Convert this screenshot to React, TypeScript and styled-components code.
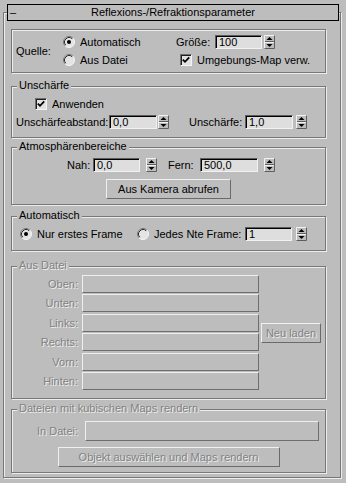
import React from "react";
import styled, { createGlobalStyle, css } from "styled-components";

const BG = "#bdbdbd";
const DARK = "#787878";
const LIGHT = "#ececec";

const Global = createGlobalStyle`
  html, body { margin: 0; padding: 0; background: ${BG}; }
  body { font-family: "Liberation Sans", Arial, sans-serif; font-size: 11px; color: #000; }
  * { box-sizing: border-box; }
`;

const disabledText = css`
  color: #828282;
  text-shadow: 1px 1px 0 #eeeeee;
`;

const Page = styled.div`
  width: 346px;
  height: 483px;
  padding: 12px 0 0 3px;
  overflow: hidden;
`;

const Frame = styled.div`
  width: 338px;
  height: 466px;
  border: 1px solid ${DARK};
  box-shadow: inset 1px 1px 0 ${LIGHT}, 1px 1px 0 ${LIGHT};
  padding-left: 3px;
  display: flex;
  flex-direction: column;
`;

const Header = styled.div`
  margin-top: -9px;
  width: 332px;
  height: 17px;
  border: 1px solid #000;
  background: ${BG};
  display: grid;
  grid-template-columns: 14px 1fr 14px;
  align-items: center;
  line-height: 15px;
`;

const Minus = styled.span`
  padding-left: 2px;
`;

const HeaderTitle = styled.span`
  text-align: center;
  white-space: nowrap;
`;

const Group = styled.div<{ $mt: number; $h: number }>`
  margin: ${(p) => p.$mt}px 0 0 4px;
  width: 315px;
  height: ${(p) => p.$h}px;
  border: 1px solid ${DARK};
  box-shadow: inset 1px 1px 0 ${LIGHT}, 1px 1px 0 ${LIGHT};
  display: flex;
  flex-direction: column;
  flex-shrink: 0;
`;

const Title = styled.span<{ $disabled?: boolean }>`
  align-self: flex-start;
  margin: -8px 0 0 5px;
  padding: 0 2px;
  height: 13px;
  line-height: 13px;
  background: ${BG};
  white-space: nowrap;
  ${(p) => p.$disabled && disabledText}
`;

const Row = styled.div<{ $pl?: number; $mt?: number }>`
  display: flex;
  align-items: center;
  height: 18px;
  padding-left: ${(p) => p.$pl ?? 0}px;
  margin-top: ${(p) => p.$mt ?? 0}px;
`;

const Label = styled.span<{ $w: number; $ml?: number }>`
  width: ${(p) => p.$w}px;
  margin-left: ${(p) => p.$ml ?? 0}px;
  flex-shrink: 0;
  white-space: nowrap;
`;

const Text = styled.span<{ $ml?: number }>`
  margin-left: ${(p) => p.$ml ?? 0}px;
  white-space: nowrap;
`;

/* ---------- group 1 ---------- */
const SourceGrid = styled.div`
  display: grid;
  grid-template-columns: 46px 114px 1fr;
  grid-template-rows: 18px 18px;
  padding: 3px 0 0 4px;
`;

const Quelle = styled.span`
  grid-row: 1 / span 2;
  align-self: center;
`;

const Cell = styled.div<{ $pl?: number }>`
  display: flex;
  align-items: center;
  padding-left: ${(p) => p.$pl ?? 0}px;
`;

const RadioItem = styled.label<{ $w?: number }>`
  display: flex;
  align-items: center;
  width: ${(p) => (p.$w ? `${p.$w}px` : "auto")};
  flex-shrink: 0;
  white-space: nowrap;
`;

const RadioSvg = styled.svg`
  width: 12px;
  height: 12px;
  flex-shrink: 0;
  margin-right: 5px;
`;

function Radio({ on }: { on?: boolean }) {
  return (
    <RadioSvg viewBox="0 0 12 12">
      <circle cx="6" cy="6" r="5.5" fill="#e4e4e4" />
      <path d="M2.11 9.89 A5.5 5.5 0 0 1 9.89 2.11" fill="none" stroke="#767676" strokeWidth="1" />
      <path d="M9.89 2.11 A5.5 5.5 0 0 1 2.11 9.89" fill="none" stroke="#f6f6f6" strokeWidth="1" />
      <path d="M2.82 9.18 A4.5 4.5 0 0 1 9.18 2.82" fill="none" stroke="#2a2a2a" strokeWidth="1" />
      {on && <circle cx="6" cy="6" r="2" fill="#000" />}
    </RadioSvg>
  );
}

const CheckBox = styled.span<{ $ml?: number }>`
  width: 12px;
  height: 12px;
  flex-shrink: 0;
  margin-left: ${(p) => p.$ml ?? 0}px;
  margin-right: 5px;
  background: #e2e2e2;
  border: 1px solid;
  border-color: #6e6e6e #f4f4f4 #f4f4f4 #6e6e6e;
  box-shadow: inset 1px 1px 0 #1e1e1e;
  display: flex;
  align-items: center;
  justify-content: center;
`;

function Check({ ml }: { ml?: number }) {
  return (
    <CheckBox $ml={ml}>
      <svg width="8" height="8" viewBox="0 0 8 8">
        <path d="M0.8 3.6 L3 5.8 L7.2 1.4" fill="none" stroke="#000" strokeWidth="1.8" />
      </svg>
    </CheckBox>
  );
}

/* ---------- spinner ---------- */
const InputBox = styled.div<{ $w: number }>`
  width: ${(p) => p.$w}px;
  height: 14px;
  flex-shrink: 0;
  background: #dedede;
  border: 1px solid;
  border-color: #5c5c5c #f2f2f2 #f2f2f2 #5c5c5c;
  box-shadow: inset 1px 1px 0 #000;
  padding-left: 3px;
  line-height: 12px;
  white-space: nowrap;
  overflow: hidden;
`;

const SpinSvg = styled.svg<{ $gap: number }>`
  width: 11px;
  height: 14px;
  flex-shrink: 0;
  margin-left: ${(p) => p.$gap}px;
`;

function SpinField({ w, gap, value }: { w: number; gap: number; value: string }) {
  return (
    <>
      <InputBox $w={w}>{value}</InputBox>
      <SpinSvg $gap={gap} viewBox="0 0 11 14">
        <rect x="0" y="0" width="11" height="14" fill="#bdbdbd" />
        <path d="M0.5 13.5 V0.5 H10.5" fill="none" stroke="#f2f2f2" />
        <path d="M0.5 13.5 H10.5 V0.5" fill="none" stroke="#5e5e5e" />
        <path d="M1 6.5 H10" stroke="#5e5e5e" />
        <path d="M1 7.5 H10" stroke="#f2f2f2" />
        <polygon points="2.5,5 8.5,5 5.5,2" fill="#000" />
        <polygon points="2.5,9 8.5,9 5.5,12" fill="#000" />
      </SpinSvg>
    </>
  );
}

/* ---------- buttons ---------- */
const Button = styled.div<{ $w: number; $mt?: number; $disabled?: boolean }>`
  width: ${(p) => p.$w}px;
  height: 20px;
  margin-top: ${(p) => p.$mt ?? 0}px;
  flex-shrink: 0;
  border: 1px solid;
  border-color: #f0f0f0 #6a6a6a #6a6a6a #f0f0f0;
  display: flex;
  align-items: center;
  justify-content: center;
  white-space: nowrap;
  ${(p) => p.$disabled && disabledText}
`;

const CenterRow = styled.div`
  display: flex;
  justify-content: center;
`;

/* ---------- disabled file group ---------- */
const FileGrid = styled.div`
  margin-top: 3px;
  display: grid;
  grid-template-columns: 70px 177px 62px;
  grid-template-rows: 19px 20px 19px 20px 19px 18px;
`;

const FileLabel = styled.span`
  grid-column: 1;
  align-self: start;
  height: 18px;
  line-height: 18px;
  text-align: right;
  padding-right: 4px;
  white-space: nowrap;
  ${disabledText}
`;

const FileField = styled.div<{ $w?: number; $h?: number }>`
  width: ${(p) => (p.$w ? `${p.$w}px` : "auto")};
  height: ${(p) => p.$h ?? 18}px;
  align-self: start;
  border: 1px solid;
  border-color: #eeeeee #6e6e6e #6e6e6e #eeeeee;
`;

const ReloadCell = styled.div`
  grid-column: 3;
  grid-row: 1 / span 6;
  align-self: center;
  padding-left: 2px;
`;

const CubeRow = styled.div`
  margin-top: 6px;
  display: flex;
  align-items: center;
`;

const CubeLabel = styled.span`
  width: 66px;
  margin-right: 7px;
  text-align: right;
  white-space: nowrap;
  ${disabledText}
`;

const files = ["Oben:", "Unten:", "Links:", "Rechts:", "Vorn:", "Hinten:"];

export default function App() {
  return (
    <Page>
      <Global />
      <Frame>
        <Header>
          <Minus>–</Minus>
          <HeaderTitle>Reflexions-/Refraktionsparameter</HeaderTitle>
          <span />
        </Header>

        <Group $mt={8} $h={44}>
          <SourceGrid>
            <Quelle>Quelle:</Quelle>
            <Cell $pl={1}>
              <RadioItem>
                <Radio on />
                Automatisch
              </RadioItem>
            </Cell>
            <Cell>
              <Label $w={39}>Größe:</Label>
              <SpinField w={47} gap={2} value="100" />
            </Cell>
            <Cell $pl={1}>
              <RadioItem>
                <Radio />
                Aus Datei
              </RadioItem>
            </Cell>
            <Cell>
              <Check ml={4} />
              <Text>Umgebungs-Map verw.</Text>
            </Cell>
          </SourceGrid>
        </Group>

        <Group $mt={13} $h={52}>
          <Title>Unschärfe</Title>
          <Row $pl={23} $mt={3}>
            <Check />
            <Text>Anwenden</Text>
          </Row>
          <Row $pl={4}>
            <Label $w={93}>Unschärfeabstand:</Label>
            <SpinField w={48} gap={1} value="0,0" />
            <Label $w={56} $ml={20}>Unschärfe:</Label>
            <SpinField w={48} gap={3} value="1,0" />
          </Row>
        </Group>

        <Group $mt={9} $h={58}>
          <Title>Atmosphärenbereiche</Title>
          <Row $pl={55} $mt={3}>
            <Label $w={26}>Nah:</Label>
            <SpinField w={47} gap={6} value="0,0" />
            <Label $w={32} $ml={11}>Fern:</Label>
            <SpinField w={58} gap={6} value="500,0" />
          </Row>
          <CenterRow>
            <Button $w={125} $mt={5}>Aus Kamera abrufen</Button>
          </CenterRow>
        </Group>

        <Group $mt={11} $h={35}>
          <Title>Automatisch</Title>
          <Row $pl={8} $mt={3}>
            <RadioItem $w={117}>
              <Radio on />
              Nur erstes Frame
            </RadioItem>
            <RadioItem $w={108}>
              <Radio />
              Jedes Nte Frame:
            </RadioItem>
            <SpinField w={47} gap={4} value="1" />
          </Row>
        </Group>

        <Group $mt={15} $h={133}>
          <Title $disabled>Aus Datei</Title>
          <FileGrid>
            {files.map((f, i) => (
              <React.Fragment key={f}>
                <FileLabel style={{ gridRow: i + 1 }}>{f}</FileLabel>
                <FileField style={{ gridRow: i + 1, gridColumn: 2 }} />
              </React.Fragment>
            ))}
            <ReloadCell>
              <Button $w={60} $disabled>Neu laden</Button>
            </ReloadCell>
          </FileGrid>
        </Group>

        <Group $mt={10} $h={64}>
          <Title $disabled>Dateien mit kubischen Maps rendern</Title>
          <CubeRow>
            <CubeLabel>In Datei:</CubeLabel>
            <FileField $w={234} $h={20} />
          </CubeRow>
          <CenterRow>
            <Button $w={222} $mt={6} $disabled>Objekt auswählen und Maps rendern</Button>
          </CenterRow>
        </Group>
      </Frame>
    </Page>
  );
}
